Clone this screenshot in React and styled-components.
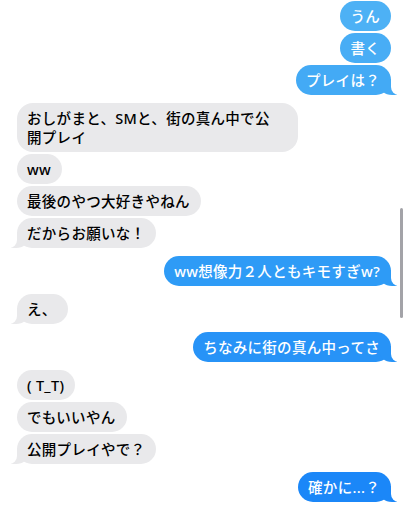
import React from 'react'
import styled, { createGlobalStyle, css } from 'styled-components';

const GlobalStyle = createGlobalStyle`
  *, *::before, *::after { box-sizing:border-box; }
  body {
    margin:0;
    background:#fff;
    font-family:"Noto Sans", "Noto Sans CJK JP", sans-serif;
  }
`;

const StyledThread = styled.main`
  position:relative;
  width:407px;
  height:512px;
  overflow:hidden;
  padding:1px 16px 0 17px;
  display:flex;
  flex-direction:column;
  gap:8px;
`;

const StyledGroup = styled.section`
  display:flex;
  flex-direction:column;
  align-items:${p => (p.$me ? 'flex-end' : 'flex-start')};
  gap:2px;
`;

const meTail = css`
  &::before {
    content:"";
    position:absolute;
    z-index:-1;
    bottom:0;
    right:-6px;
    width:18px;
    height:16px;
    background:${p => p.$tone};
    border-bottom-left-radius:13px 11px;
  }
  &::after {
    content:"";
    position:absolute;
    z-index:-1;
    bottom:0;
    right:-10px;
    width:10px;
    height:16px;
    background:#fff;
    border-bottom-left-radius:8px;
  }
`;

const themTail = css`
  &::before {
    content:"";
    position:absolute;
    z-index:-1;
    bottom:0;
    left:-6px;
    width:18px;
    height:16px;
    background:#e9e9eb;
    border-bottom-right-radius:13px 11px;
  }
  &::after {
    content:"";
    position:absolute;
    z-index:-1;
    bottom:0;
    left:-10px;
    width:10px;
    height:16px;
    background:#fff;
    border-bottom-right-radius:8px;
  }
`;

const StyledBubble = styled.div`
  position:relative;
  z-index:0;
  max-width:281px;
  width:${p => (p.$wide ? '281px' : 'auto')};
  padding:5.5px 11px 5.5px 10px;
  border-radius:16px;
  font-size:14.5px;
  font-weight:500;
  line-height:19px;
  letter-spacing:0.3px;
  color:${p => (p.$me ? '#fff' : '#000')};
  background:${p => (p.$me ? p.$tone : '#e9e9eb')};
  ${p => p.$tail && (p.$me ? meTail : themTail)}
`;

const StyledScrollbar = styled.div`
  position:absolute;
  top:208px;
  right:4px;
  width:3px;
  height:110px;
  border-radius:2px;
  background:#a3a3a8;
`;

const groups = [
  { me: true, msgs: [['うん', '#4db1f5'], ['書く', '#48adf5'], ['プレイは？', '#43aaf5']] },
  { me: false, msgs: ['おしがまと、SMと、街の真ん中で公\n開プレイ', 'ww', '最後のやつ大好きやねん', 'だからお願いな！'] },
  { me: true, msgs: [['ww想像力２人ともキモすぎw?', '#2e9bf6']] },
  { me: false, msgs: ['え、'] },
  { me: true, msgs: [['ちなみに街の真ん中ってさ', '#2793f7']] },
  { me: false, msgs: ['( T_T)', 'でもいいやん', '公開プレイやで？'] },
  { me: true, msgs: [['確かに...？', '#1b87f8']] },
];

const App = () => {
  return (
    <>
      <GlobalStyle />
      <StyledThread>
        {groups.map((g, gi) => (
          <StyledGroup key={gi} $me={g.me}>
            {g.msgs.map((m, mi) => {
              const text = g.me ? m[0] : m;
              const lines = text.split('\n');
              return (
                <StyledBubble
                  key={mi}
                  $me={g.me}
                  $tone={g.me ? m[1] : undefined}
                  $tail={mi === g.msgs.length - 1}
                  $wide={lines.length > 1}
                >
                  {lines.map((l, li) => (
                    <React.Fragment key={li}>
                      {li > 0 && <br />}
                      {l}
                    </React.Fragment>
                  ))}
                </StyledBubble>
              );
            })}
          </StyledGroup>
        ))}
        <StyledScrollbar />
      </StyledThread>
    </>
  )
}

export default App
